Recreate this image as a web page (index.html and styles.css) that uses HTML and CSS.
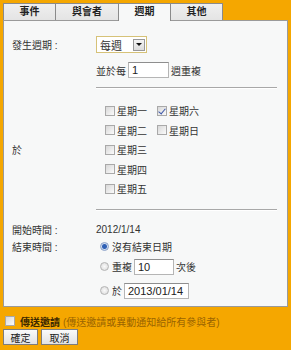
FILE: index.html
```html
<!DOCTYPE html>
<html lang="zh-Hant">
<head>
  <meta charset="UTF-8" />
  <title>週期</title>
  <link rel="stylesheet" href="styles.css">
</head>
<body>

  <!-- Tabs -->
  <ul class="tabs">
    <li class="tab t1">事件</li>
    <li class="tab t2">與會者</li>
    <li class="tab t3 active">週期</li>
    <li class="tab t4">其他</li>
  </ul>

  <!-- Recurrence panel -->
  <div class="panel">
    <div class="row row-freq">
      <span class="label">發生週期 :</span>
      <div class="select">
        <span class="select-text">每週</span>
        <span class="select-btn"><span class="arrow"></span></span>
      </div>
    </div>

    <div class="row row-every">
      <span class="label"></span>
      <div class="inline">並於每 <span class="input w-every">1</span> 週重複</div>
    </div>

    <div class="row"><span></span><div class="rule"></div></div>

    <div class="row row-days">
      <span class="label">於</span>
      <div class="days">
        <label class="day"><span class="cb"></span>星期一</label>
        <label class="day"><span class="cb checked"></span>星期六</label>
        <label class="day"><span class="cb"></span>星期二</label>
        <label class="day"><span class="cb"></span>星期日</label>
        <label class="day"><span class="cb"></span>星期三</label>
        <span></span>
        <label class="day"><span class="cb"></span>星期四</label>
        <span></span>
        <label class="day"><span class="cb"></span>星期五</label>
        <span></span>
      </div>
    </div>

    <div class="row rule-2"><span></span><div class="rule"></div></div>

    <div class="row row-start">
      <span class="label">開始時間 :</span>
      <span>2012/1/14</span>
    </div>

    <div class="row row-end">
      <span class="label">結束時間 :</span>
      <div class="ends">
        <div class="end end-none"><span class="radio on"></span>沒有結束日期</div>
        <div class="end end-count"><span class="radio"></span>重複 <span class="input w-count">10</span> 次後</div>
        <div class="end end-date"><span class="radio"></span>於 <span class="input w-date">2013/01/14</span></div>
      </div>
    </div>
  </div>

  <!-- Invite + buttons -->
  <div class="invite">
    <span class="cb"></span>
    <b>傳送邀請</b>
    <span class="hint">(傳送邀請或異動通知給所有參與者)</span>
  </div>
  <div class="buttons">
    <button class="btn ok">確定</button>
    <button class="btn cancel">取消</button>
  </div>

</body>
</html>
```

FILE: styles.css
```css
body {
  margin: 0;
  padding: 3px 0 0;
  background: #f5a700;
  font-family: "Liberation Sans", "Noto Sans CJK TC", sans-serif;
  font-size: 10px;
  color: #333;
  width: 291px;
  height: 350px;
  overflow: hidden;
}

/* Tabs */
.tabs {
  list-style: none;
  margin: 0 0 0 3px;
  padding: 0;
  display: flex;
  height: 17px;
}

.tab {
  box-sizing: border-box;
  height: 17px;
  line-height: 15px;
  text-align: center;
  font-weight: bold;
  color: #222;
  background: linear-gradient(#efefef, #e4e4e4);
  border: 1px solid #8a8a8a;
  border-bottom: none;
  margin-right: -1px;
}

.t1 { width: 53px; }
.t2 { width: 64px; }
.t3 { width: 53px; }
.t4 { width: 53px; }

.tab.active {
  background: #f7f8f8;
  height: 18px;
  position: relative;
  z-index: 2;
}

/* Panel */
.panel {
  box-sizing: border-box;
  margin: 0 3px;
  height: 287px;
  background: #f7f8f8;
  border: 1px solid #9a9a9a;
  padding: 15px 0 0 8px;
}

.row {
  display: grid;
  grid-template-columns: 84px 1fr;
  align-items: center;
}

.row-freq { height: 17px; }

.select {
  box-sizing: border-box;
  width: 51px;
  height: 17px;
  border: 1px solid #d6c278;
  background: #fff;
  display: flex;
  align-items: center;
  justify-content: space-between;
  padding: 0 1px 0 3px;
}

.select-text { font-size: 11px; }

.select-btn {
  box-sizing: border-box;
  width: 12px;
  height: 12px;
  border: 1px solid #999;
  background: linear-gradient(#f4f4f4, #dcdcdc);
  display: flex;
  align-items: center;
  justify-content: center;
}

.arrow {
  width: 0;
  height: 0;
  border-left: 3px solid transparent;
  border-right: 3px solid transparent;
  border-top: 3px solid #111;
}

.row-every { margin-top: 9px; height: 16px; }

.inline { display: flex; align-items: center; gap: 2px; }

.input {
  box-sizing: border-box;
  display: inline-block;
  height: 16px;
  line-height: 14px;
  border: 1px solid #b5b5b5;
  border-top-color: #8e8e8e;
  background: #fff;
  padding-left: 3px;
  font-size: 11px;
  color: #222;
}

.w-every { width: 41px; }
.w-count { width: 40px; }
.w-date { width: 65px; }

.rule {
  height: 1px;
  background: #a8a8a8;
  border-bottom: 1px solid #fff;
  margin: 9px 10px 0 0;
}

/* Weekdays */
.row-days { margin-top: 12px; }

.days {
  display: grid;
  grid-template-columns: 52px 60px;
  grid-auto-rows: 19.5px;
  padding-left: 9px;
}

.day { display: flex; align-items: center; }

.cb {
  box-sizing: border-box;
  display: inline-block;
  width: 10px;
  height: 10px;
  margin-right: 2px;
  border: 1px solid #a9a9a9;
  background: linear-gradient(135deg, #d8d8d8, #fbfbfb);
  position: relative;
}

.cb.checked::after {
  content: "";
  position: absolute;
  left: 2px;
  top: 0;
  width: 3px;
  height: 6px;
  border: solid #3d57a8;
  border-width: 0 1px 1px 0;
  transform: rotate(40deg);
}

.rule-2 .rule { margin-top: 10px; }

.row-start { margin-top: 11px; height: 14px; }

/* End options */
.row-end { align-items: start; margin-top: 3px; }

.ends { display: flex; flex-direction: column; }

.end {
  display: flex;
  align-items: center;
  gap: 2px;
  padding-left: 4px;
  height: 16px;
}

.end-count { margin-top: 4px; }
.end-date { margin-top: 8px; }

.radio {
  box-sizing: border-box;
  display: inline-block;
  width: 9px;
  height: 9px;
  border-radius: 50%;
  border: 1px solid #b4b4b4;
  background: radial-gradient(circle, #fafafa, #d9d9d9);
  margin-right: 1px;
}

.radio.on {
  border-color: #8aa0c8;
  background: radial-gradient(circle, #2e5fb5 0 2px, #cfdcf0 3px);
}

/* Footer */
.invite {
  display: flex;
  align-items: center;
  height: 14px;
  margin: 7px 0 0 5px;
  gap: 3px;
}

.invite b { color: #3e2a00; }

.hint { color: #9a6400; }

.buttons {
  display: flex;
  gap: 3px;
  margin: 1px 0 0 3px;
}

.btn {
  box-sizing: border-box;
  height: 16px;
  padding: 0;
  font-family: inherit;
  font-size: 10px;
  color: #222;
  background: linear-gradient(#fafafa, #e2e2e2);
  border: 1px solid #7d7d7d;
  border-radius: 0;
}

.ok { width: 35px; }
.cancel { width: 37px; }
```
